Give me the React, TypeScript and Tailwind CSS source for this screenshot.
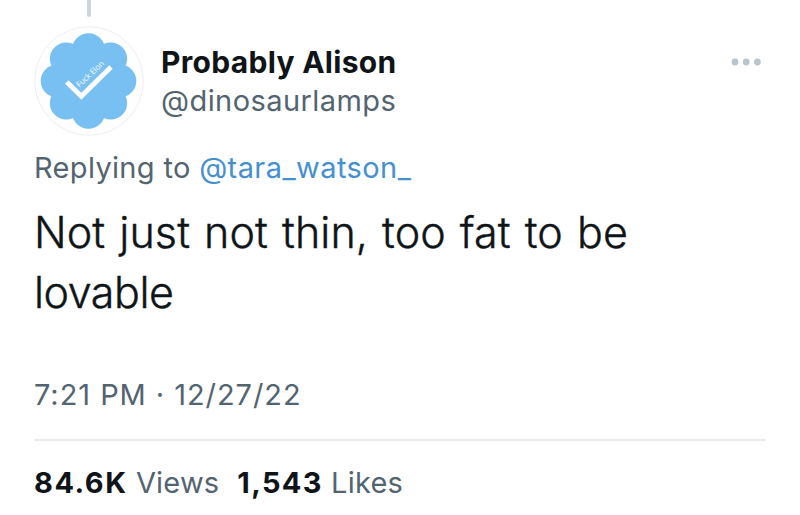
const LOBES = [0, 45, 90, 135, 180, 225, 270, 315];

function Avatar() {
  return (
    <svg className="block h-[110px] w-[110px] shrink-0" viewBox="0 0 110 110">
      <circle cx="55" cy="55" r="54.3" fill="#fefefe" stroke="#eeeff0" strokeWidth="1" />
      <g fill="#78bff2">
        <circle cx="54.5" cy="55" r="36" />
        {LOBES.map((angle) => (
          <circle key={angle} cx="54.5" cy="23.6" r="16.4" transform={`rotate(${angle} 54.5 55)`} />
        ))}
      </g>
      <path
        d="M32.8 56 L47.3 70.3 L77 41"
        fill="none"
        stroke="#fff"
        strokeWidth="5"
        strokeLinejoin="miter"
      />
      <text
        x="0"
        y="0"
        transform="translate(45.3 61.8) rotate(-43)"
        className="fill-white font-['Open_Sans',sans-serif] text-[8px]"
        textLength="34.5"
      >
        Fuck Elon
      </text>
    </svg>
  );
}

function MoreIcon() {
  return (
    <svg className="mt-[35px] block h-2 w-[30px]" viewBox="0 0 30 8" fill="#b9c5cd">
      <circle cx="4" cy="4" r="3.4" />
      <circle cx="15.2" cy="4" r="3.4" />
      <circle cx="26.4" cy="4" r="3.4" />
    </svg>
  );
}

export default function App() {
  return (
    <article className="h-[515px] w-[800px] overflow-hidden bg-white px-[34px] font-['Inter',sans-serif] whitespace-nowrap text-[#536471]">
      <div className="ml-[53px] h-[17px] w-1 rounded-b-sm bg-[#cbd5db]" />
      <header className="mt-[9px] flex h-[111px]">
        <Avatar />
        <div className="ml-[17px] flex grow flex-col pt-[17px]">
          <span className="text-[30px] leading-[38px] font-bold tracking-[0.3px] text-[#0f1419]">
            Probably Alison
          </span>
          <span className="mt-px text-[29px] leading-[38px] tracking-[0.43px]">@dinosaurlamps</span>
        </div>
        <div className="-mt-[3px] mr-[5px]">
          <MoreIcon />
        </div>
      </header>
      <p className="mt-[12px] text-[29px] leading-[38px] tracking-[0.33px]">
        Replying to{" "}
        <span className="text-[#4590d1] tracking-[0.42px]">@tara_watson_</span>
      </p>
      <p className="mt-[15px] text-[43px] leading-[60px] font-light tracking-[0.1px] text-[#0f1419] [-webkit-text-stroke:0.4px_#0f1419] [word-spacing:1.8px]">
        Not just not thin, too fat to be
        <br />
        <span className="tracking-[-0.45px]">lovable</span>
      </p>
      <p className="mt-[54px] text-[29px] leading-[38px] tracking-[0.94px]">7:21 PM · 12/27/22</p>
      <hr className="mt-[25px] border-t-2 border-[#e9edf0]" />
      <div className="mt-[23px] flex text-[29px] leading-[38px]">
        <span className="tracking-[0.2px]">
          <b className="tracking-[1.5px] text-[#0f1419]">84.6K</b> Views
        </span>
        <span className="ml-[18px] tracking-[0.2px]">
          <b className="tracking-[1.3px] text-[#0f1419]">1,543</b> Likes
        </span>
      </div>
    </article>
  );
}
